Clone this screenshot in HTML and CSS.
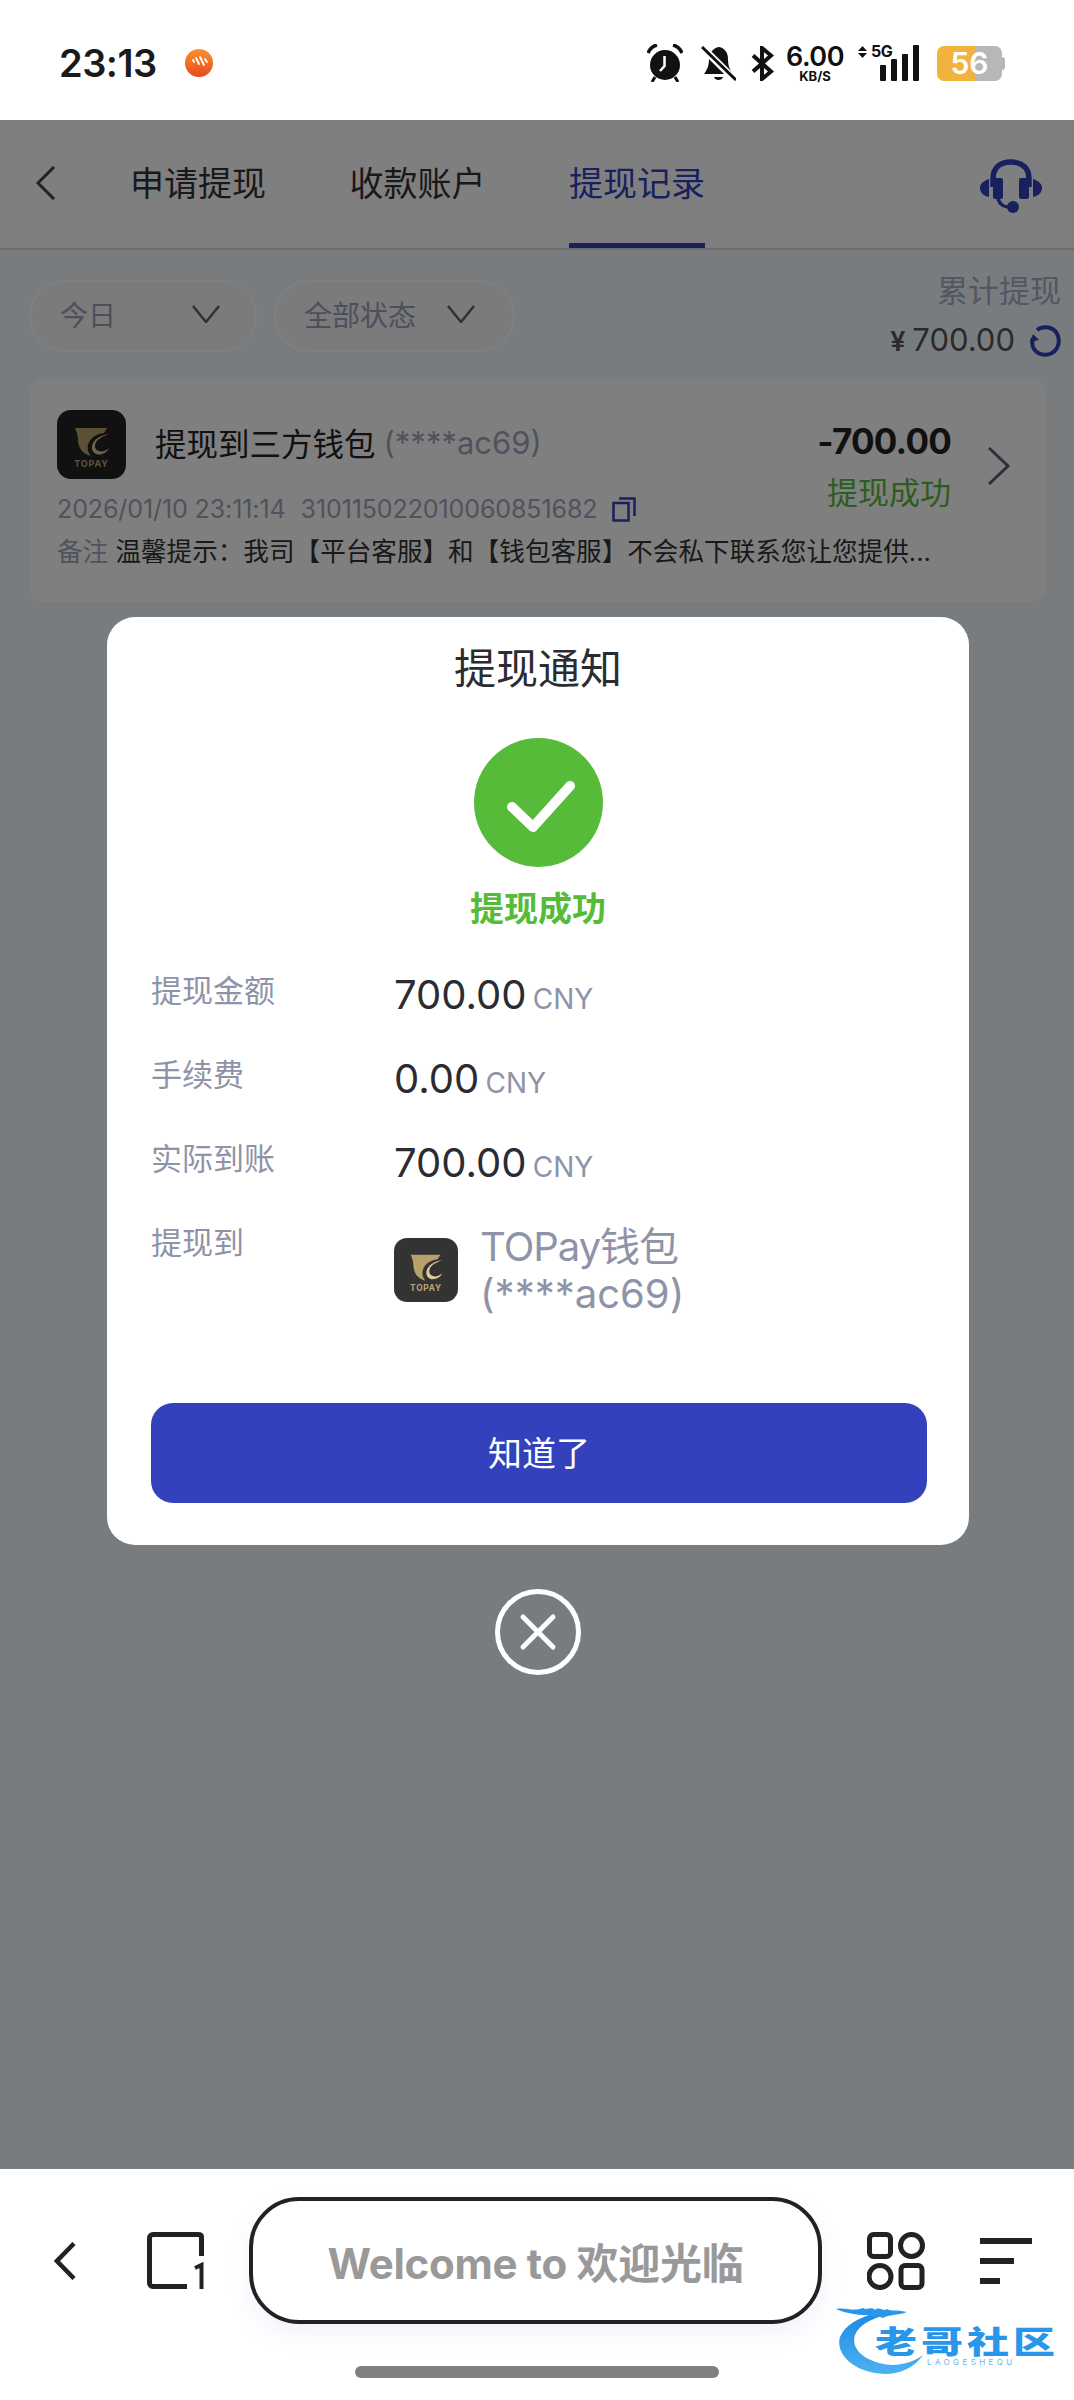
FILE: index.html
```html
<!DOCTYPE html>
<html lang="zh-CN">
<head>
  <meta charset="UTF-8">
  <title>提现记录</title>
  <link rel="stylesheet" href="styles.css">
</head>
<body>

  <!-- Status bar -->
  <div class="status-bar">
    <span class="clock">23:13</span>
    <svg class="rec-dot" width="28" height="28" viewBox="0 0 28 28">
      <defs><linearGradient id="dot" x1="0" y1="0" x2="0" y2="1"><stop offset="0" stop-color="#f8932c"/><stop offset="1" stop-color="#e64a1e"/></linearGradient></defs>
      <circle cx="14" cy="14" r="14" fill="url(#dot)"/>
      <path d="M8 11l1 2M11 9l3 6M15 8l4 8M20 10l2 3" stroke="#fff" stroke-width="1.8" stroke-linecap="round"/>
    </svg>
    <div class="status-icons">
      <svg class="ic-alarm" width="36" height="38" viewBox="0 0 36 38">
        <circle cx="18" cy="21" r="15" fill="#111"/>
        <path d="M17.500 12V22L13 27" stroke="#fff" stroke-width="2.500" fill="none"/>
        <path d="M1 9C3 4 6 2 10 1M35 9C33 4 30 2 26 1" stroke="#111" stroke-width="3.500" fill="none"/>
        <path d="M8 33L5 38M28 33L31 38" stroke="#111" stroke-width="3"/>
      </svg>
      <svg class="ic-bell" width="35" height="35" viewBox="0 0 35 35">
        <path d="M18 1C24 2 27 7 27 13C27 20 29 24 32 28H3C6 24 8 20 8 13C8 7 12 2 18 1Z" fill="#111"/>
        <path d="M13 31H22C21 35 14 35 13 31Z" fill="#111"/>
        <path d="M-1 -1L35 35" stroke="#fff" stroke-width="7"/>
        <path d="M1 1L35 34" stroke="#111" stroke-width="3"/>
      </svg>
      <svg class="ic-bt" width="23" height="35" viewBox="0 0 23 35">
        <path d="M2 9.500L20 25.500L11 33V2L20 9.500L2 25.500" stroke="#111" stroke-width="4" fill="none"/>
      </svg>
      <div class="speed">
        <span class="speed-num">6.00</span>
        <span class="speed-unit">KB/S</span>
      </div>
      <div class="signal">
        <div class="net-label">
          <svg width="9" height="12" viewBox="0 0 9 12"><path d="M4.500 0L9 5H0ZM0 7H9L4.500 12Z" fill="#111"/></svg>
          <span>5G</span>
        </div>
        <div class="bars">
          <i class="bar b1"></i><i class="bar b2"></i><i class="bar b3"></i><i class="bar b4"></i>
        </div>
      </div>
      <div class="battery"><span class="battery-num">56</span></div>
    </div>
  </div>

  <div class="main">
    <!-- Tabs -->
    <div class="tabs">
      <svg class="tab-back" width="21" height="34" viewBox="0 0 21 34"><path d="M19 1L3 17L19 33" stroke="#3f4250" stroke-width="3" fill="none"/></svg>
      <div class="tab">申请提现</div>
      <div class="tab">收款账户</div>
      <div class="tab active">提现记录</div>
      <svg class="headset" width="62" height="54" viewBox="0 0 62 54">
        <path d="M13 28V20C13 9 20 3 31 3C42 3 49 9 49 20V28" stroke="#3341bd" stroke-width="5.500" fill="none"/>
        <rect x="13" y="19" width="10" height="21" rx="2" fill="#3341bd"/>
        <rect x="39" y="19" width="10" height="21" rx="2" fill="#3341bd"/>
        <path d="M9 20C3 22 0 25 0 29C0 34 4 37 9 38ZM53 20C59 22 62 25 62 29C62 34 58 37 53 38Z" fill="#3341bd"/>
        <path d="M18 40C20 46 24 48 29 48" stroke="#3341bd" stroke-width="3.500" fill="none"/>
        <circle cx="33" cy="48" r="6" fill="#3341bd"/>
      </svg>
    </div>

    <!-- Filters -->
    <div class="filters">
      <div class="pills">
        <div class="pill pill-date"><span>今日</span><svg class="caret" width="28" height="18" viewBox="0 0 28 18"><path d="M1 1L14 17L27 1" stroke="#5d6278" stroke-width="2.500" fill="none"/></svg></div>
        <div class="pill pill-status"><span>全部状态</span><svg class="caret" width="28" height="18" viewBox="0 0 28 18"><path d="M1 1L14 17L27 1" stroke="#5d6278" stroke-width="2.500" fill="none"/></svg></div>
      </div>
      <div class="summary">
        <div class="summary-label">累计提现</div>
        <div class="summary-value">
          <span><b class="yen">¥</b>700.00</span>
          <svg width="32" height="32" viewBox="0 0 32 32"><path d="M8 5C13 1 22 1 27 7C32 14 30 24 23 28C16 32 7 29 4 22C3 19 3 16 4 13" stroke="#3341bd" stroke-width="4" fill="none"/><path d="M1 17L4 9L10 15Z" fill="#3341bd"/></svg>
        </div>
      </div>
    </div>

    <!-- Record card -->
    <div class="record">
      <div class="record-top">
        <div class="record-left">
          <div class="record-title">
            <svg class="record-logo" width="69" height="69" viewBox="0 0 69 69">
              <rect width="69" height="69" rx="14" fill="#232323"/>
              <path d="M18 18H50L47 23C39 24 33 28 31 35C30 39 31 43 34 46C26 44 22 39 21 31C21 27 20 22 18 18Z" fill="#b8a06a"/>
              <path d="M52 24C43 25 36 30 35 36C34 42 39 46 45 44C49 43 51 40 52 38C49 41 45 42 42 41C38 40 37 36 39 32C41 29 46 26 52 24Z" fill="#d9c48f"/>
              <text x="34.500" y="57" text-anchor="middle" class="logo-text">TOPAY</text>
            </svg>
            <span class="title-main">提现到三方钱包</span>
            <span class="title-acct">(****ac69)</span>
          </div>
          <div class="record-meta">
            <span>2026/01/10 23:11:14</span>
            <span>310115022010060851682</span>
            <svg width="24" height="25" viewBox="0 0 24 25"><rect x="1.500" y="6" width="15" height="17.500" stroke="#3341bd" stroke-width="2.500" fill="none"/><path d="M7 1.500H22.500V19" stroke="#3341bd" stroke-width="2.500" fill="none"/></svg>
          </div>
        </div>
        <div class="record-right">
          <div class="amount">-700.00</div>
          <div class="state">提现成功</div>
        </div>
        <svg class="record-arrow" width="24" height="38" viewBox="0 0 24 38"><path d="M2 1L21 19L2 37" stroke="#5d6278" stroke-width="3" fill="none"/></svg>
      </div>
      <div class="record-note"><span class="note-key">备注</span> 温馨提示：我司【平台客服】和【钱包客服】不会私下联系您让您提供...</div>
    </div>

    <!-- Dialog -->
    <div class="overlay">
      <div class="modal">
        <h3 class="modal-title">提现通知</h3>
        <svg class="ok-icon" width="129" height="129" viewBox="0 0 129 129">
          <circle cx="64.500" cy="64.500" r="64.500" fill="#57bb3a"/>
          <path d="M38 69L59 89L96 48" stroke="#fff" stroke-width="10" stroke-linecap="round" stroke-linejoin="round" fill="none"/>
        </svg>
        <div class="ok-text">提现成功</div>

        <div class="row"><div class="row-label">提现金额</div><div class="row-value">700.00 <small>CNY</small></div></div>
        <div class="row"><div class="row-label">手续费</div><div class="row-value">0.00 <small>CNY</small></div></div>
        <div class="row"><div class="row-label">实际到账</div><div class="row-value">700.00 <small>CNY</small></div></div>
        <div class="row row-last">
          <div class="row-label">提现到</div>
          <svg class="row-logo" width="64" height="64" viewBox="0 0 69 69">
            <rect width="69" height="69" rx="14" fill="#333"/>
            <path d="M18 18H50L47 23C39 24 33 28 31 35C30 39 31 43 34 46C26 44 22 39 21 31C21 27 20 22 18 18Z" fill="#b8a06a"/>
            <path d="M52 24C43 25 36 30 35 36C34 42 39 46 45 44C49 43 51 40 52 38C49 41 45 42 42 41C38 40 37 36 39 32C41 29 46 26 52 24Z" fill="#e0cc98"/>
            <text x="34.500" y="57" text-anchor="middle" class="logo-text">TOPAY</text>
          </svg>
          <div class="row-wallet"><span class="wallet-name">TOPay钱包</span><br>(****ac69)</div>
        </div>

        <button class="ok-btn">知道了</button>
      </div>
      <svg class="close-icon" width="86" height="86" viewBox="0 0 86 86">
        <circle cx="43" cy="43" r="40.500" stroke="#fff" stroke-width="5" fill="none"/>
        <path d="M28 28L58 58M58 28L28 58" stroke="#fff" stroke-width="5" stroke-linecap="round"/>
      </svg>
    </div>
  </div>

  <!-- Browser bar -->
  <div class="browser-bar">
    <div class="browser-row">
      <svg class="br-back" width="22" height="38" viewBox="0 0 22 38"><path d="M20 1.500L3 19L20 36.500" stroke="#222" stroke-width="4.500" fill="none"/></svg>
      <svg class="br-tabs" width="57" height="57" viewBox="0 0 57 57">
        <path d="M54.500 24V5C54.500 3 53 2.500 51 2.500H6C4 2.500 2.500 4 2.500 6V51C2.500 53 4 54.500 6 54.500H40" stroke="#222" stroke-width="5" fill="none"/>
        <path d="M48 36L54.500 33V57" stroke="#222" stroke-width="4" fill="none"/>
      </svg>
      <div class="br-address">Welcome to 欢迎光临</div>
      <svg class="br-grid" width="58" height="58" viewBox="0 0 58 58">
        <rect x="2.500" y="2.500" width="21" height="22" rx="4" stroke="#222" stroke-width="5" fill="none"/>
        <circle cx="44.500" cy="13.500" r="11" stroke="#222" stroke-width="5" fill="none"/>
        <circle cx="13" cy="44.500" r="11" stroke="#222" stroke-width="5" fill="none"/>
        <rect x="34" y="33.500" width="21" height="22" rx="4" stroke="#222" stroke-width="5" fill="none"/>
      </svg>
      <div class="br-menu"><i class="m1"></i><i class="m2"></i><i class="m3"></i></div>
    </div>
    <div class="home-bar"></div>

    <!-- Watermark over the bar -->
    <div class="watermark">
      <svg class="wm-dragon" width="92" height="74" viewBox="0 0 92 74">
        <defs><linearGradient id="wm" x1="0" y1="0" x2="0" y2="1"><stop offset="0" stop-color="#1f88e0"/><stop offset="1" stop-color="#4db2f2"/></linearGradient></defs>
        <path d="M42 10C24 14 10 22 5 34C0 50 18 70 50 71C66 71 80 64 88 52C74 62 58 64 44 60C26 55 16 44 20 32C24 22 36 16 50 12Z" fill="url(#wm)"/>
        <path d="M1 6C10 4 18 9 28 5C32 8 36 3 40 7C44 3 48 9 52 6C56 9 60 6 72 9C62 13 54 11 48 15C42 12 38 15 32 12C22 12 10 10 1 6Z" fill="#2a96ea"/>
      </svg>
      <div class="wm-name">老哥社区</div>
      <div class="wm-sub">LAOGESHEQU</div>
    </div>
  </div>

</body>
</html>
```

FILE: styles.css
```css
* {
  box-sizing: border-box;
}

html, body {
  margin: 0;
  padding: 0;
}

body {
  width: 1074px;
  height: 2400px;
  display: flex;
  flex-direction: column;
  overflow: hidden;
  background: #fff;
  color: #222;
  font-family: Inter, "Noto Sans CJK SC", sans-serif;
}

.logo-text {
  font-size: 9px;
  font-weight: 700;
  letter-spacing: 0.8px;
  fill: #bba878;
}

/* Status bar */
.status-bar {
  height: 120px;
  flex: none;
  display: flex;
  align-items: center;
  padding: 6px 72px 0 59px;
}

.clock {
  font-size: 38px;
  font-weight: 600;
  letter-spacing: -0.5px;
  color: #1a1a1a;
}

.rec-dot {
  margin-left: 28px;
}

.status-icons {
  margin-left: auto;
  display: flex;
  align-items: center;
}

.ic-bell {
  margin-left: 18px;
}

.ic-bt {
  margin-left: 15px;
}

.speed {
  margin-left: 11px;
  width: 60px;
  display: flex;
  flex-direction: column;
  align-items: center;
  color: #111;
}

.speed-num {
  font-size: 27px;
  font-weight: 600;
  line-height: 26px;
  letter-spacing: -0.5px;
}

.speed-unit {
  font-size: 13px;
  font-weight: 700;
  line-height: 12px;
}

.signal {
  margin-left: 13px;
  width: 61px;
  height: 36px;
  position: relative;
}

.net-label {
  display: flex;
  align-items: center;
  gap: 4px;
  font-size: 16px;
  font-weight: 700;
  line-height: 13px;
  color: #111;
  letter-spacing: -0.5px;
}

.bars {
  position: absolute;
  right: 0;
  bottom: 0;
  display: flex;
  align-items: flex-end;
  gap: 5px;
}

.bar {
  width: 6px;
  background: #111;
  border-radius: 1px;
}

.b1 { height: 16px; }
.b2 { height: 22px; }
.b3 { height: 27px; }
.b4 { height: 36px; }

.battery {
  margin-left: 18px;
  width: 65px;
  height: 35px;
  border-radius: 7px;
  background: linear-gradient(90deg, #f2b23e 0, #f2b23e 38px, #b7b7b7 38px);
  display: flex;
  align-items: center;
  justify-content: center;
  position: relative;
}

.battery::after {
  content: "";
  position: absolute;
  right: -3px;
  top: 11px;
  width: 3px;
  height: 13px;
  background: #b7b7b7;
  border-radius: 0 3px 3px 0;
}

.battery-num {
  font-size: 30px;
  font-weight: 600;
  color: #fff;
  line-height: 1;
}

/* Main page, dimmed by the overlay */
.main {
  flex: 1;
  position: relative;
  background: #f3f8ff;
}

.tabs {
  height: 130px;
  display: flex;
  align-items: stretch;
  padding: 3px 32px 0 35px;
  background: #fff;
  border-bottom: 2px solid #dcdcdc;
}

.tab-back {
  align-self: center;
  margin: 0 74px 6px 0;
}

.tab {
  display: flex;
  align-items: center;
  height: 125px;
  margin-right: 83.500px;
  padding-bottom: 4px;
  font-size: 34px;
  color: #333;
  border-bottom: 5px solid transparent;
}

.tab.active {
  color: #3341bd;
  border-bottom-color: #3341bd;
}

.headset {
  align-self: center;
  margin-left: auto;
}

.filters {
  display: flex;
  justify-content: space-between;
  padding: 22px 13px 0 29px;
}

.pills {
  display: flex;
  gap: 17px;
  margin-top: 8px;
}

.pill {
  height: 72px;
  border: 2px solid #fff;
  border-radius: 36px;
  background: #f6f6f6;
  display: flex;
  align-items: center;
  padding-bottom: 4px;
  font-size: 28px;
  color: #9a9fb8;
}

.pill-date {
  width: 228px;
  padding-left: 29px;
  gap: 76px;
}

.pill-status {
  width: 241px;
  padding-left: 28px;
  gap: 31px;
}

.summary {
  text-align: right;
  color: #a8adc4;
}

.summary-label {
  font-size: 31px;
  line-height: 38px;
}

.summary-value {
  margin-top: 13px;
  display: flex;
  align-items: center;
  justify-content: flex-end;
  gap: 14px;
  font-size: 31px;
  line-height: 34px;
  color: #555;
}

.yen {
  margin-right: 7px;
  font-weight: 600;
  font-size: 27px;
}

.record {
  margin: 20px 27px 0 29px;
  height: 223px;
  padding: 31px 36px 0 28px;
  background: #fff;
  border-radius: 16px;
}

.record-top {
  display: flex;
  align-items: flex-start;
}

.record-left {
  flex: 1;
}

.record-title {
  display: flex;
  align-items: center;
  font-size: 31.500px;
}

.record-logo {
  margin-right: 29px;
}

.title-main, .title-acct {
  margin-bottom: 5px;
}

.title-acct {
  margin-left: 8px;
  color: #a0a5bc;
  font-size: 31px;
}

.record-meta {
  margin-top: 13px;
  display: flex;
  align-items: center;
  gap: 15px;
  font-size: 25px;
  line-height: 34px;
  color: #a0a5bc;
  letter-spacing: -0.100px;
}

.record-right {
  text-align: right;
  margin-top: 11px;
}

.amount {
  font-size: 35px;
  font-weight: 700;
  line-height: 40px;
  letter-spacing: -0.800px;
  color: #222;
}

.state {
  margin-top: 12px;
  font-size: 31px;
  line-height: 40px;
  color: #57bb3a;
}

.record-arrow {
  margin: 37px 0 0 36px;
}

.record-note {
  margin-top: 8px;
  font-size: 25.600px;
  line-height: 36px;
  white-space: nowrap;
  color: #333;
}

.note-key {
  color: #a0a5bc;
}

/* Dialog */
.overlay {
  position: absolute;
  top: 0;
  left: 0;
  right: 0;
  bottom: 0;
  background: rgba(0, 0, 0, 0.5);
  display: flex;
  flex-direction: column;
  align-items: center;
  padding: 497px 0 0 2px;
}

.modal {
  width: 862px;
  height: 928px;
  padding: 27px 44px 0;
  background: #fff;
  border-radius: 28px;
  display: flex;
  flex-direction: column;
}

.modal-title {
  margin: 0;
  text-align: center;
  font-size: 42px;
  font-weight: 400;
  line-height: 50px;
  color: #2b2b30;
}

.ok-icon {
  align-self: center;
  margin-top: 44px;
}

.ok-text {
  margin: 20px 0 40px;
  text-align: center;
  font-size: 34px;
  font-weight: 700;
  line-height: 44px;
  color: #57bb3a;
}

.row {
  height: 84px;
  display: flex;
  align-items: flex-start;
}

.row-label {
  width: 243px;
  flex: none;
  margin-top: 4px;
  font-size: 31px;
  line-height: 32px;
  color: #8e93a8;
}

.row-value {
  font-size: 40px;
  line-height: 48px;
  color: #2b2b30;
}

.row-value small {
  margin-left: -5px;
  font-size: 28px;
  color: #8e93a8;
}

.row-last {
  height: 94px;
}

.row-logo {
  margin: 15px 22px 0 0;
}

.row-wallet {
  font-size: 40px;
  line-height: 47px;
  color: #8e93a8;
}

.wallet-name {
  letter-spacing: -1px;
}

.ok-btn {
  margin: 86px -2px 0 0;
  height: 100px;
  padding: 0 0 4px;
  border: none;
  border-radius: 22px;
  background: #3341bd;
  color: #fff;
  font-family: inherit;
  font-size: 34px;
}

.close-icon {
  margin-top: 44px;
}

/* Browser bar */
.browser-bar {
  height: 231px;
  flex: none;
  position: relative;
  background: #fff;
}

.browser-row {
  display: flex;
  align-items: center;
  padding: 28px 0 0 54px;
}

.br-tabs {
  margin-left: 71px;
}

.br-address {
  width: 573px;
  height: 127px;
  margin-left: 45px;
  border: 4px solid #222;
  border-radius: 50px;
  display: flex;
  align-items: center;
  justify-content: center;
  font-size: 42px;
  font-weight: 700;
  letter-spacing: -0.300px;
  color: #999;
  box-shadow: 0 10px 24px rgba(80, 100, 200, 0.08);
}

.br-grid {
  margin-left: 45px;
}

.br-menu {
  margin-left: 55px;
  width: 52px;
  height: 46px;
  display: flex;
  flex-direction: column;
  justify-content: space-between;
}

.br-menu i {
  display: block;
  height: 6px;
  background: #222;
}

.m1 { width: 52px; }
.m2 { width: 34px; }
.m3 { width: 20px; }

.home-bar {
  width: 364px;
  height: 12px;
  margin: 42px auto 0;
  border-radius: 6px;
  background: #808080;
}

.watermark {
  position: absolute;
  left: 835px;
  top: 134px;
  width: 230px;
  height: 76px;
}

.wm-dragon {
  position: absolute;
  left: 0;
  top: 0;
}

.wm-name {
  position: absolute;
  left: 40px;
  top: 16px;
  font-size: 42px;
  font-weight: 900;
  line-height: 46px;
  letter-spacing: 4px;
  white-space: nowrap;
  color: #2a96ea;
  transform: scaleY(0.72);
}

.wm-sub {
  position: absolute;
  left: 92px;
  top: 54px;
  font-size: 8px;
  line-height: 10px;
  letter-spacing: 3.400px;
  white-space: nowrap;
  color: #6db4ea;
}
```
